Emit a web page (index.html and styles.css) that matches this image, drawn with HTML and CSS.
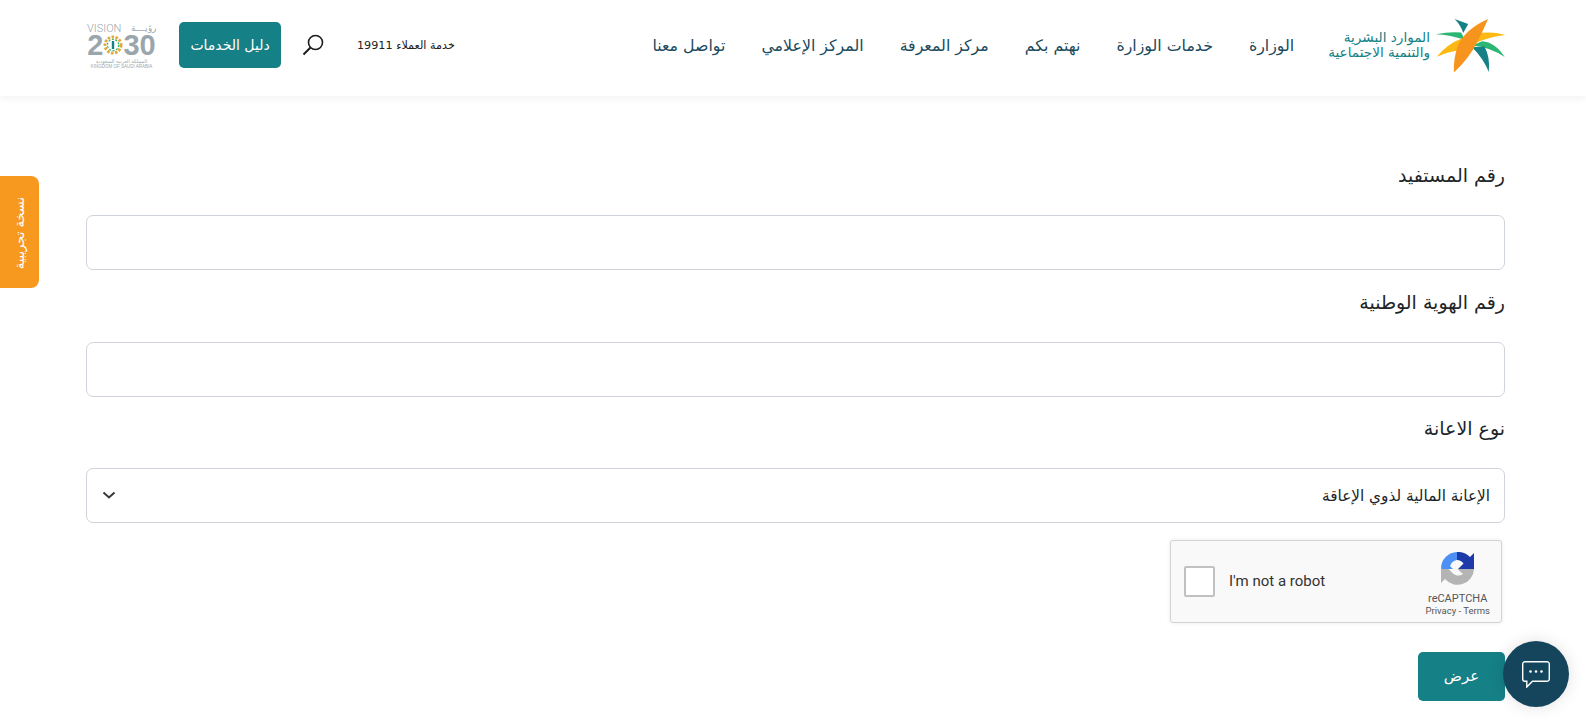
FILE: index.html
```html
<!DOCTYPE html>
<html lang="ar" dir="rtl">
<head>
  <meta charset="UTF-8">
  <title>الموارد البشرية والتنمية الاجتماعية</title>
  <link rel="stylesheet" href="styles.css">
</head>
<body>

  <!-- Header -->
  <header class="site-header">
    <a class="logo" href="#">
      <svg class="logo-mark" viewBox="400 50 220 170">
        <path fill="#158086" d="M462 55 L503 70 L488 97 Q480 72 462 55Z"/>
        <path fill="#2bb673" d="M405 101 Q450 92 482 96 L493 118 Q450 103 405 101Z"/>
        <path fill="#fdb913" d="M408 169 Q440 130 485 113 L470 150 Q440 155 408 169Z"/>
        <path fill="#fdb913" d="M523 100 Q570 90 615 103 Q565 108 513 132Z"/>
        <path fill="#2bb673" d="M613 170 Q585 125 545 122 L515 135 Q570 140 613 170Z"/>
        <path fill="#158086" d="M515 140 L552 138 Q570 170 565 215 Q550 175 515 140Z"/>
        <path fill="#f7941e" d="M563 55 Q495 85 472 135 Q458 175 460 216 Q505 175 530 125 Q548 90 563 55Z"/>
      </svg>
      <span class="logo-text">الموارد البشرية<br>والتنمية الاجتماعية</span>
    </a>

    <nav class="main-nav">
      <a href="#">الوزارة</a>
      <a href="#">خدمات الوزارة</a>
      <a href="#">نهتم بكم</a>
      <a href="#">مركز المعرفة</a>
      <a href="#">المركز الإعلامي</a>
      <a href="#">تواصل معنا</a>
    </nav>

    <div class="header-tools">
      <span class="call-center">خدمة العملاء 19911</span>
      <svg class="search-icon" viewBox="0 0 22 22" fill="none" stroke="#1c1c1c">
        <circle cx="13.5" cy="8.5" r="7" stroke-width="1.6"/>
        <path d="M8.5 13.5 L1.5 20.5" stroke-width="2"/>
      </svg>
      <a class="guide-btn" href="#">دليل الخدمات</a>
      <div class="vision" dir="ltr">
        <div class="vision-top"><span>VISION</span><span class="vision-ar">رؤيـــة</span></div>
        <div class="vision-num">2<svg class="vision-flower" viewBox="0 0 20 20">
          <circle cx="10" cy="10" r="8" fill="none" stroke="#e0a93a" stroke-width="3" stroke-dasharray="2.5 1.5"/>
          <circle cx="10" cy="10" r="5.6" fill="none" stroke="#2bb673" stroke-width="1.2" stroke-dasharray="2 1.5"/>
          <rect x="8.8" y="6" width="2.4" height="8" fill="#158086"/>
        </svg>30</div>
        <div class="vision-ksa-ar">المملكة العربية السعودية</div>
        <div class="vision-ksa">KINGDOM OF SAUDI ARABIA</div>
      </div>
    </div>
  </header>

  <!-- Side tab -->
  <div class="beta-tab"><span>نسخة تجريبية</span></div>

  <!-- Form -->
  <main class="form-page">
    <div class="form-group">
      <label for="beneficiary">رقم المستفيد</label>
      <input class="form-control" id="beneficiary" type="text">
    </div>
    <div class="form-group">
      <label for="national-id">رقم الهوية الوطنية</label>
      <input class="form-control" id="national-id" type="text">
    </div>
    <div class="form-group">
      <label for="aid-type">نوع الاعانة</label>
      <div class="select-wrap">
        <select class="form-control" id="aid-type">
          <option>الإعانة المالية لذوي الإعاقة</option>
        </select>
        <svg class="select-arrow" viewBox="0 0 14 8" fill="none" stroke="#343a40" stroke-width="2">
          <path d="M1.5 1.5 L7 6.5 L12.5 1.5"/>
        </svg>
      </div>
    </div>

    <div class="captcha" dir="ltr">
      <span class="captcha-box"></span>
      <span class="captcha-label">I'm not a robot</span>
      <div class="captcha-brand">
        <svg class="captcha-logo" viewBox="0 0 33 33">
          <path fill="#b4b4b4" d="M0 17 H7.5 L10.5 20 A8 8 0 0 0 22 22 L16.5 17 H33 A16.5 16.5 0 0 1 4 27 L0 31Z"/>
          <path fill="#4d90f5" d="M1 17 L0 16.5 A16.5 16.5 0 0 1 16 0 H17 V7.5 L13 9 A8 8 0 0 0 9 14 L12 17Z"/>
          <path fill="#1c3aa9" d="M16 0 A16.5 16.5 0 0 1 29 5 L33 1 V17 H17 L22.5 11.5 A8 8 0 0 0 16 8Z"/>
        </svg>
        <div class="captcha-name">reCAPTCHA</div>
        <div class="captcha-links">Privacy - Terms</div>
      </div>
    </div>

    <button class="submit-btn" type="button">عرض</button>
  </main>

  <!-- Chat button -->
  <button class="chat-btn" type="button">
    <svg viewBox="0 0 28 27" fill="none" stroke="#fff" stroke-width="1.4">
      <path d="M3 .7 H25 A2.3 2.3 0 0 1 27.3 3 V18 A2.3 2.3 0 0 1 25 20.3 H10.5 L4.8 26 V20.3 H3 A2.3 2.3 0 0 1 .7 18 V3 A2.3 2.3 0 0 1 3 .7Z"/>
      <circle cx="8.5" cy="10.5" r="1.3" fill="#fff" stroke="none"/>
      <circle cx="14" cy="10.5" r="1.3" fill="#fff" stroke="none"/>
      <circle cx="19.5" cy="10.5" r="1.3" fill="#fff" stroke="none"/>
    </svg>
  </button>

</body>
</html>
```
FILE: styles.css
```css
* {
  box-sizing: border-box;
}

html, body {
  height: 100%;
}

body {
  font-family: 'DejaVu Sans', 'Noto Sans', sans-serif;
  margin: 0;
  background: #fff;
  color: #212529;
  overflow: hidden;
}

a {
  text-decoration: none;
  color: inherit;
}

/* Header */
.site-header {
  height: 96px;
  display: flex;
  align-items: center;
  padding: 0 79px 6px 86px;
  background: #fff;
  box-shadow: 0 2px 8px rgba(0, 0, 0, 0.06);
}

.logo {
  display: flex;
  align-items: center;
  gap: 4px;
  margin-left: 34px;
}

.logo-mark {
  width: 73px;
  height: 57px;
}

.logo-text {
  font-size: 13.6px;
  line-height: 15px;
  color: #158086;
  white-space: nowrap;
}

.main-nav {
  display: flex;
  gap: 36px;
  font-size: 15.8px;
  color: #1a4a5e;
  white-space: nowrap;
}

.header-tools {
  display: flex;
  align-items: center;
  margin-right: auto;
}

.call-center {
  font-size: 11.2px;
  color: #222;
  white-space: nowrap;
}

.search-icon {
  width: 22px;
  height: 22px;
  margin: 0 33px 0 21px;
}

.guide-btn {
  width: 102px;
  height: 46px;
  display: flex;
  align-items: center;
  justify-content: center;
  background: #158086;
  border-radius: 5px;
  color: #fff;
  font-size: 14px;
  white-space: nowrap;
}

.vision {
  width: 70px;
  padding-left: 1px;
  margin-right: 23px;
  color: #9ba6ac;
  line-height: 1;
}

.vision-top {
  display: flex;
  justify-content: space-between;
  align-items: center;
  font-family: Roboto, sans-serif;
  font-weight: 300;
  font-size: 11px;
  height: 11px;
  margin-top: 2px;
  white-space: nowrap;
}

.vision-ar {
  font-family: 'DejaVu Sans', sans-serif;
  font-size: 9px;
}

.vision-num {
  display: flex;
  align-items: center;
  justify-content: center;
  font-family: 'Liberation Sans', sans-serif;
  font-size: 29px;
  font-weight: 700;
  height: 23px;
}

.vision-flower {
  width: 20px;
  height: 20px;
}

.vision-ksa-ar {
  font-size: 5px;
  text-align: center;
  direction: rtl;
  margin-top: 2px;
}

.vision-ksa {
  font-family: 'Liberation Sans', sans-serif;
  font-size: 4.5px;
  text-align: center;
  white-space: nowrap;
  margin-top: 1px;
}

/* Side tab */
.beta-tab {
  position: fixed;
  left: 0;
  top: 176px;
  width: 39px;
  height: 112px;
  display: flex;
  align-items: center;
  justify-content: center;
  padding-top: 3px;
  background: #f7991f;
  border-radius: 0 8px 8px 0;
  color: #fff;
  font-size: 13px;
}

.beta-tab span {
  writing-mode: vertical-rl;
  transform: rotate(180deg);
  white-space: nowrap;
}

/* Form */
.form-page {
  padding: 64px 81px 0 86px;
  display: flex;
  flex-direction: column;
}

.form-group {
  margin-bottom: 16.5px;
}

.form-group label {
  display: block;
  height: 30px;
  line-height: 30px;
  margin-bottom: 25px;
  font-size: 19px;
  color: #212529;
}

.form-control {
  display: block;
  width: 100%;
  height: 55px;
  padding: 0 14px;
  border: 1px solid #ced4da;
  border-radius: 7px;
  background: #fff;
  font-family: inherit;
  font-size: 15.3px;
  color: #212529;
  appearance: none;
}

.select-wrap {
  position: relative;
}

.select-arrow {
  position: absolute;
  left: 16px;
  top: 23px;
  width: 14px;
  height: 8px;
}

/* Captcha */
.captcha {
  align-self: flex-start;
  margin-right: 3px;
  width: 332px;
  height: 83px;
  display: flex;
  align-items: center;
  padding: 0 11px 0 13px;
  background: #f9f9f9;
  border: 1px solid #d3d3d3;
  border-radius: 3px;
  box-shadow: 0 0 4px rgba(0, 0, 0, 0.08);
  font-family: Roboto, sans-serif;
}

.captcha-box {
  width: 31px;
  height: 31px;
  background: #fff;
  border: 2px solid #c1c1c1;
  border-radius: 2px;
}

.captcha-label {
  margin-left: 14px;
  font-size: 15px;
  color: #333;
}

.captcha-brand {
  margin-left: auto;
  margin-top: 7px;
  display: flex;
  flex-direction: column;
  align-items: center;
  color: #555;
}

.captcha-logo {
  width: 33px;
  height: 33px;
  margin-bottom: 7px;
}

.captcha-name {
  font-size: 11px;
  line-height: 14px;
}

.captcha-links {
  font-size: 9.5px;
  line-height: 12px;
  margin-top: -1px;
}

.submit-btn {
  align-self: flex-start;
  margin-top: 29px;
  width: 87px;
  height: 49px;
  border: none;
  border-radius: 5px;
  background: #158086;
  color: #fff;
  font-family: inherit;
  font-size: 15px;
}

/* Chat */
.chat-btn {
  position: fixed;
  left: 1503px;
  top: 641px;
  width: 66px;
  height: 66px;
  display: flex;
  align-items: center;
  justify-content: center;
  padding: 0;
  border: none;
  border-radius: 50%;
  background: #15455c;
  box-shadow: 0 0 16px rgba(0, 0, 0, 0.12);
}

.chat-btn svg {
  width: 28px;
  height: 27px;
}
```
